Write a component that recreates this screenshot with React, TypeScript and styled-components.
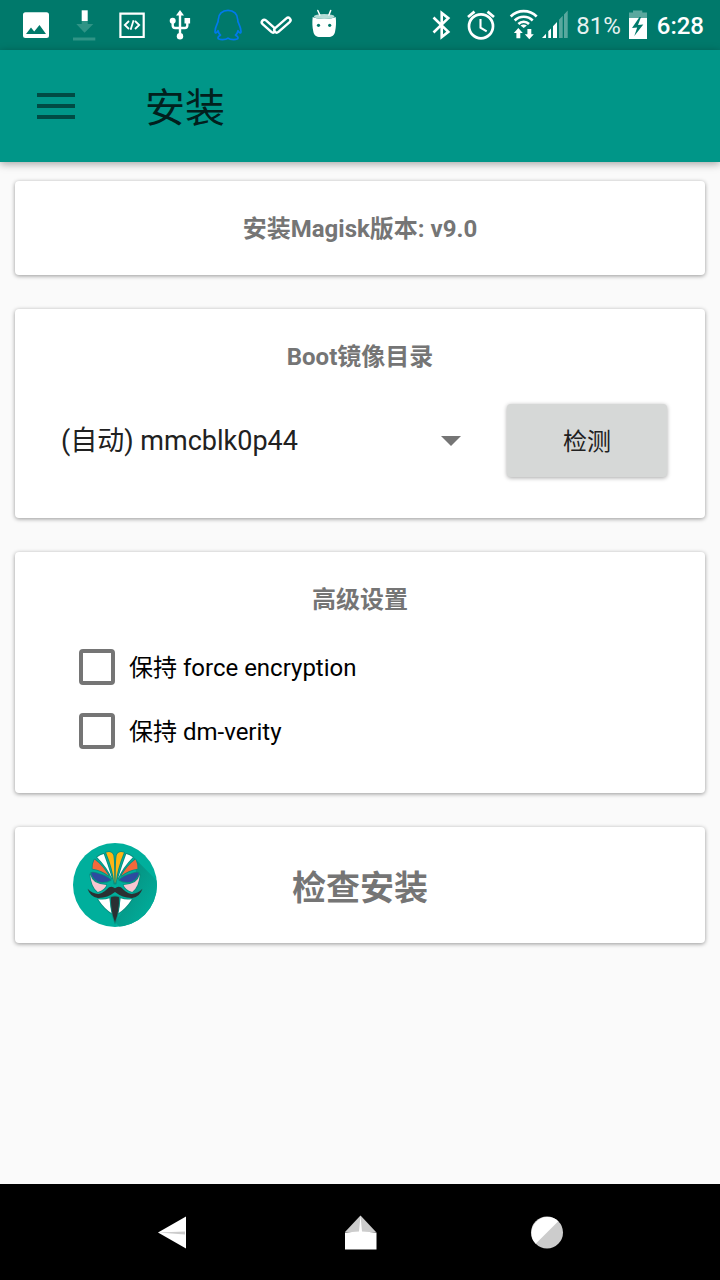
import React from 'react';
import styled, { createGlobalStyle } from 'styled-components';

const GlobalStyle = createGlobalStyle`
  * { box-sizing: border-box; }
  body {
    margin: 0;
    background: #fafafa;
    font-family: Roboto, "Noto Sans CJK SC", sans-serif;
  }
  button, select { font: inherit; }
  svg { display: block; flex: none; }
`;

const Screen = styled.div`
  display: flex;
  flex-direction: column;
  min-height: 100vh;
`;

const StatusBar = styled.div`
  display: flex;
  justify-content: space-between;
  height: 50px;
  padding: 0 16px 0 20px;
  background: #00796b;
  color: #fff;
`;

const StatusGroup = styled.div<{ $gap: number }>`
  display: flex;
  align-items: center;
  gap: ${(p) => p.$gap}px;
`;

const StatusText = styled.span<{ $strong?: boolean }>`
  font-size: 24px;
  line-height: 28px;
  padding-top: 2px;
  font-weight: ${(p) => (p.$strong ? 500 : 400)};
  opacity: ${(p) => (p.$strong ? 1 : 0.9)};
`;

const AppBar = styled.header`
  position: relative;
  display: flex;
  align-items: center;
  gap: 70px;
  height: 112px;
  padding: 0 37px;
  background: #009688;
  box-shadow: 0 2px 8px rgba(0, 0, 0, 0.35);
`;

const MenuButton = styled.button`
  padding: 0;
  border: 0;
  background: none;
  color: #004b44;
`;

const Title = styled.h1`
  margin: 0;
  padding-top: 5px;
  font-size: 40px;
  line-height: 48px;
  font-weight: 400;
  color: #02201d;
`;

const Content = styled.main`
  flex: 1;
  display: flex;
  flex-direction: column;
  gap: 34px;
  padding: 19px 15px;
`;

const Card = styled.section`
  border-radius: 4px;
  background: #fff;
  box-shadow: 0 1px 4px rgba(0, 0, 0, 0.4);
`;

const InfoCard = styled(Card)`
  padding: 34px 0 32px;
`;

const BootCard = styled(Card)`
  padding: 34px 38px 41px;
`;

const AdvancedCard = styled(Card)`
  padding: 34px 64px 30px;
`;

const Heading = styled.h2`
  margin: 0;
  font-size: 24px;
  line-height: 28px;
  font-weight: 700;
  text-align: center;
  color: #757575;
`;

const BootRow = styled.div`
  display: flex;
  align-items: center;
  gap: 46px;
  margin-top: 33px;
`;

const SelectBox = styled.div`
  flex: 1;
  display: grid;
  align-items: center;
  & > * { grid-area: 1 / 1; }
  & > svg { justify-self: end; pointer-events: none; }
`;

const Select = styled.select`
  width: 100%;
  height: 48px;
  padding: 0 24px 0 8px;
  border: 0;
  appearance: none;
  background: transparent;
  font-size: 27px;
  color: #212121;
`;

const DetectButton = styled.button`
  width: 160px;
  height: 73px;
  padding: 0 0 2px;
  border: 0;
  border-radius: 4px;
  background: #d6d8d7;
  box-shadow: 0 1px 4px rgba(0, 0, 0, 0.35);
  font-size: 24px;
  color: #212121;
`;

const Options = styled.div`
  display: flex;
  flex-direction: column;
  margin-top: 21px;
`;

const Option = styled.label`
  display: flex;
  align-items: center;
  gap: 14px;
  height: 64px;
  font-size: 24px;
  line-height: 28px;
  color: #000;
`;

const OptionText = styled.span`
  padding-top: 2px;
`;

const Checkbox = styled.input`
  width: 36px;
  height: 36px;
  margin: 0;
  border: 4px solid #757575;
  border-radius: 4px;
  appearance: none;
  background: #fff;
  &:checked { background: #009688; }
`;

const InstallButton = styled.button`
  display: grid;
  grid-template-columns: 84px 1fr 84px;
  align-items: center;
  padding: 16px 58px;
  border: 0;
  border-radius: 4px;
  background: #fff;
  box-shadow: 0 1px 4px rgba(0, 0, 0, 0.4);
  color: #757575;
`;

const InstallText = styled.span`
  padding-top: 5px;
  font-size: 34px;
  line-height: 40px;
  font-weight: 700;
`;

const NavBar = styled.nav`
  display: flex;
  align-items: center;
  justify-content: center;
  gap: 139px;
  height: 96px;
  background: #000;
`;

const NavButton = styled.button`
  width: 48px;
  height: 48px;
  padding: 0;
  border: 0;
  background: none;
`;

function StatusIcon({ width = 32, children }: { width?: number; children: React.ReactNode }) {
  return (
    <svg width={width} height="50" viewBox={`0 0 ${width} 50`} fill="none" aria-hidden="true">
      {children}
    </svg>
  );
}

function Notifications() {
  return (
    <StatusGroup $gap={16}>
      <StatusIcon>
        <path fill="#fff" fillRule="evenodd" d="M5.500 12.300h21a2.500 2.500 0 0 1 2.500 2.500v20.700a2.500 2.500 0 0 1-2.500 2.500h-21a2.500 2.500 0 0 1-2.500-2.500V14.800a2.500 2.500 0 0 1 2.500-2.500zM6 34h20l-6.500-9-5.300 6.500L11 27.500z" />
      </StatusIcon>
      <StatusIcon>
        <path fill="#fff" d="M13.700 10.300h6V21h-6z" />
        <path fill="#2f9486" d="M13.700 21h6v3h5.600l-8.700 8.700L8.300 24h5.400zM5 37.500h22.300v3H5z" />
      </StatusIcon>
      <StatusIcon>
        <path stroke="#fff" strokeWidth="2.200" d="M4.400 13.700h23.300v23.300H4.400z" />
        <path stroke="#fff" strokeWidth="1.800" d="M13 21l-4.200 4 4.200 4M14.600 29.800l3-9.600M19 21l4.200 4-4.200 4" />
      </StatusIcon>
      <StatusIcon>
        <path stroke="#fff" strokeWidth="2.400" d="M16 14v22M8.700 21v4.500q0 2.500 2.500 2.500H20.800q2.500 0 2.500-2.500V21" />
        <path fill="#fff" d="M16 10l4 5.500h-8zM20.500 18h5.600v5.600h-5.600z" />
        <circle cx="8.700" cy="20.700" r="3" fill="#fff" />
        <circle cx="16" cy="36.300" r="3.200" fill="#fff" />
      </StatusIcon>
      <StatusIcon>
        <path stroke="#0079ec" strokeWidth="1.700" strokeLinejoin="round" d="M16 10.300c-5.700 0-9.700 4-9.700 9.200 0 1.800-.4 2.700-1 4-1.200 2.700-2.300 5-2.300 8 0 1.500.8 2 1.800.8l1.200-1.600c.5 2 1.300 3.300 2.500 4.500-1.800.8-2.700 1.800-2.500 3 .3 1.700 7.500 2 10 0 2.500 2 9.700 1.700 10 0 .2-1.200-.7-2.200-2.500-3 1.200-1.200 2-2.500 2.500-4.500l1.200 1.600c1 1.200 1.800.7 1.800-.8 0-3-1.100-5.300-2.300-8-.6-1.300-1-2.200-1-4 0-5.200-4-9.200-9.700-9.200z" />
      </StatusIcon>
      <StatusIcon>
        <g strokeLinecap="round">
          <path stroke="#fff" strokeWidth="7.400" d="M4.300 22.300l8.700 7.700" />
          <path stroke="#00796b" strokeWidth="2.600" d="M4.300 22.300l8.700 7.700" />
          <path stroke="#fff" strokeWidth="7.400" d="M28 20.200L16.800 30" />
          <path stroke="#00796b" strokeWidth="2.600" d="M28 20.200L16.800 30" />
        </g>
      </StatusIcon>
      <StatusIcon>
        <path fill="#fff" d="M4.700 17c0 0 2 1.700 11.500 1.700S27.700 17 27.700 17c.6 5 .4 10-.6 14.500-.8 4-3 5.500-6.900 5.500h-8c-3.900 0-6.100-1.500-6.900-5.500-1-4.500-1.200-9.500-.6-14.500z" />
        <ellipse cx="16.200" cy="16.500" rx="10.300" ry="2.500" fill="#b5dcd6" />
        <path stroke="#fff" strokeWidth="1.500" strokeLinecap="round" d="M9.800 10.500l2 4.500M22.700 10.500l-1.800 4.500" />
        <circle cx="10.500" cy="25.300" r="1.600" fill="#00796b" />
        <circle cx="21.700" cy="25.300" r="1.600" fill="#00796b" />
      </StatusIcon>
    </StatusGroup>
  );
}

function SystemStatus() {
  return (
    <StatusGroup $gap={8}>
      <StatusIcon width={26}>
        <path stroke="#fff" strokeWidth="2.600" d="M5.500 17.500l14.800 14.300-6.600 5.200V13l6.600 5.200L5.500 32.500" />
      </StatusIcon>
      <StatusIcon width={38}>
        <circle cx="19" cy="26.300" r="12" stroke="#fff" strokeWidth="2.700" />
        <path stroke="#fff" strokeWidth="2.700" d="M6 17l6.500-5.400M32 17l-6.500-5.400" />
        <path stroke="#fff" strokeWidth="2.100" d="M18.500 19v8.700l6.200 3.700" />
      </StatusIcon>
      <StatusIcon width={60}>
        <path stroke="#fff" strokeWidth="2.600" d="M2.700 16.500a18.500 18.500 0 0 1 26 0M6.700 20.500a12.700 12.700 0 0 1 18 0M10.400 24a7.500 7.500 0 0 1 10.600 0" />
        <path fill="#fff" d="M12.500 25.500q3.200-2 6.400 0L15.700 28z" />
        <path fill="#fff" d="M10.300 28l4.500 5h-2.500v5.300H8.400V33H5.900zM19.400 29h3.900v5.300h2.500l-4.500 5-4.500-5h2.600z" />
        <path fill="#fff" d="M34 38l4-4.300V38zM40.300 38v-6.800l2.700-2.800V38zM45 38V26.300l4-4.300v16z" />
        <path fill="#59a89e" d="M51 38V19.800l3.700-4V38zM56 38V14.400l3.700-4V38z" />
      </StatusIcon>
      <StatusText>81%</StatusText>
      <StatusIcon width={20}>
        <path fill="#59a89e" d="M4 10.500h9.300v2H18V18H-1v-5.500h5z" />
        <path fill="#fff" d="M-1 18h19v21H-1z" />
        <path fill="#00796b" d="M10.500 17L3 28l5.200-.6L5.300 36l9-11.600-5.300.7 3-8.100z" />
      </StatusIcon>
      <StatusText $strong>6:28</StatusText>
    </StatusGroup>
  );
}

function MaskHalf() {
  return (
    <g stroke="#0a8a7c" strokeWidth="5" strokeLinejoin="round" paintOrder="stroke">
      <path fill="#f8c6d0" d="M91 134Q95 149 106 157Q120 165 140 166Q136 180 114 187Q94 172 91 134z" />
      <path fill="#2d4ba0" d="M94 129Q104 126 118 133Q140 139 153 151Q138 160 117 156Q98 148 94 129z" />
      <path fill="#f4693b" d="M104 89Q129 107 147 138Q127 122 98 117Q97 102 104 89z" />
      <path fill="#fff" d="M112 82Q121 74 132 72Q144 104 157 146Q142 112 112 82z" />
      <path fill="#ffb515" d="M139 68Q155 62 161 76Q164 90 164 162Q160 118 139 68z" />
      <path fill="#fff" d="M115 209Q134 212 149 206Q151 230 157 252Q134 238 115 209z" />
      <path fill="#2b3033" stroke="none" d="M166 176Q157 168 148 173C139 180 132 191 116 193Q97 192 83 177Q91 202 114 205Q142 206 166 187z" />
    </g>
  );
}

function MagiskLogo() {
  return (
    <svg width="84" height="84" viewBox="39 39 254 254" aria-hidden="true">
      <defs>
        <clipPath id="disc"><circle cx="166" cy="166" r="127" /></clipPath>
        <linearGradient id="shade" x1="0" y1="0" x2="1" y2="1">
          <stop offset="0.200" stopColor="#078f7f" />
          <stop offset="0.800" stopColor="#00af9c" />
        </linearGradient>
      </defs>
      <circle cx="166" cy="166" r="127" fill="#00af9c" />
      <path clipPath="url(#disc)" fill="url(#shade)" d="M222 82L310 170V310H196L166 278L210 215L235 160z" />
      <MaskHalf />
      <g transform="matrix(-1 0 0 1 332 0)"><MaskHalf /></g>
      <path fill="#2b3033" stroke="#0a8a7c" strokeWidth="5" paintOrder="stroke" d="M154 203Q166 198 178 203Q180 240 166 279Q152 240 154 203z" />
    </svg>
  );
}

export default function App() {
  return (
    <>
      <GlobalStyle />
      <Screen>
        <StatusBar>
          <Notifications />
          <SystemStatus />
        </StatusBar>
        <AppBar>
          <MenuButton aria-label="菜单">
            <svg width="38" height="26" viewBox="0 0 38 26" fill="currentColor">
              <path d="M0 0h38v4H0zM0 11h38v4H0zM0 22h38v4H0z" />
            </svg>
          </MenuButton>
          <Title>安装</Title>
        </AppBar>
        <Content>
          <InfoCard>
            <Heading>安装Magisk版本: v9.0</Heading>
          </InfoCard>
          <BootCard>
            <Heading id="boot-heading">Boot镜像目录</Heading>
            <BootRow>
              <SelectBox>
                <Select aria-labelledby="boot-heading">
                  <option>(自动) mmcblk0p44</option>
                </Select>
                <svg width="20" height="10" viewBox="0 0 20 10" aria-hidden="true">
                  <path fill="#757575" d="M0 0h20L10 10z" />
                </svg>
              </SelectBox>
              <DetectButton>检测</DetectButton>
            </BootRow>
          </BootCard>
          <AdvancedCard>
            <Heading>高级设置</Heading>
            <Options>
              <Option>
                <Checkbox type="checkbox" />
                <OptionText>保持 force encryption</OptionText>
              </Option>
              <Option>
                <Checkbox type="checkbox" />
                <OptionText>保持 dm-verity</OptionText>
              </Option>
            </Options>
          </AdvancedCard>
          <InstallButton>
            <MagiskLogo />
            <InstallText>检查安装</InstallText>
          </InstallButton>
        </Content>
        <NavBar>
          <NavButton aria-label="返回">
            <svg width="48" height="48" viewBox="0 0 48 48">
              <path fill="#fff" d="M9 24.500L37 8.500v32z" />
              <path fill="#ccc" d="M9 24.500l27-1v3z" />
            </svg>
          </NavButton>
          <NavButton aria-label="主页">
            <svg width="48" height="48" viewBox="0 0 48 48">
              <path fill="#ccc" d="M24.500 7.500L40 24H9z" />
              <path fill="#fff" d="M9 24.500l14-1 1.500-16L26 23.500l14.500 1v17H9z" />
            </svg>
          </NavButton>
          <NavButton aria-label="最近任务">
            <svg width="48" height="48" viewBox="0 0 48 48">
              <circle cx="24" cy="24.500" r="16" fill="#ccc" />
              <path fill="#fff" d="M35.300 13.200a16 16 0 0 0-22.600 22.600z" />
            </svg>
          </NavButton>
        </NavBar>
      </Screen>
    </>
  );
}
